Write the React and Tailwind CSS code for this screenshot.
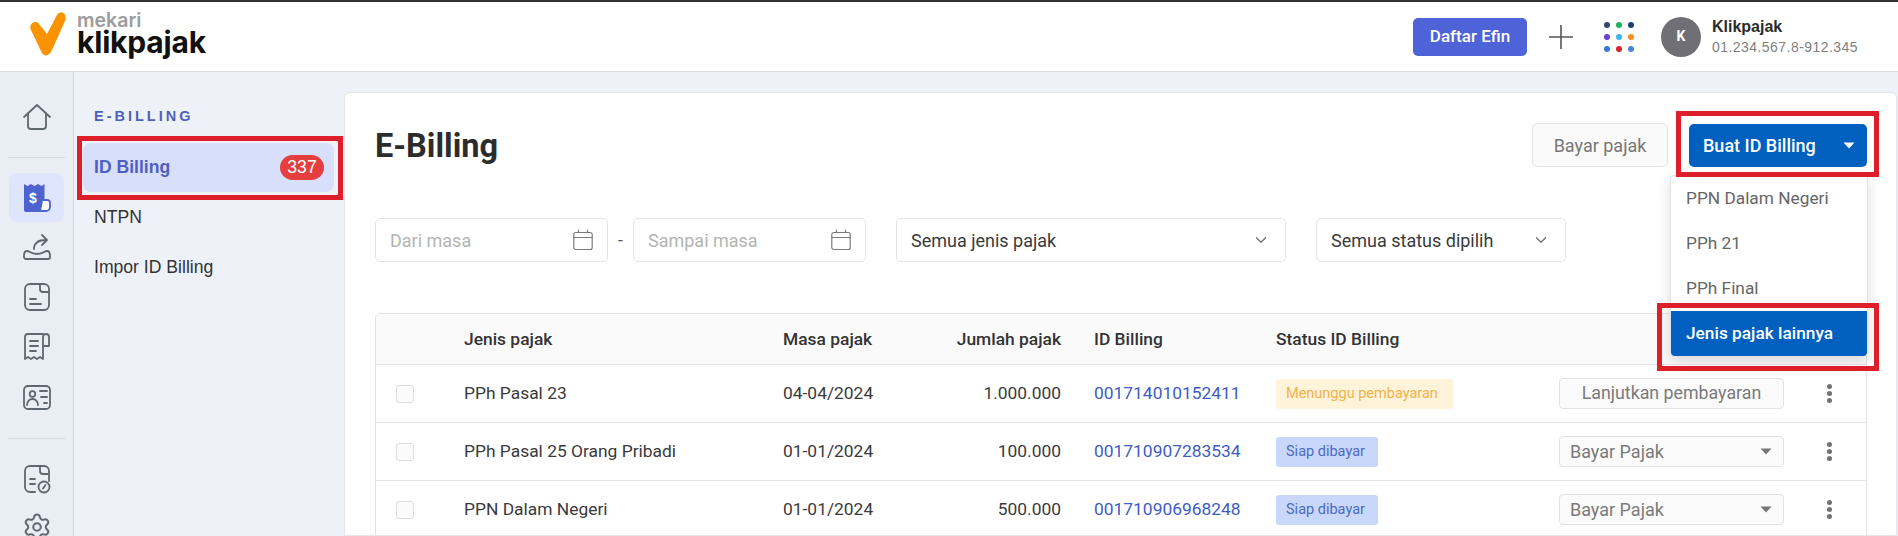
import React from "react";
import { ChevronDown, Settings } from "lucide-react";

const rows = [
  { jenis: "PPh Pasal 23", masa: "04-04/2024", jumlah: "1.000.000", id: "001714010152411", status: "wait", action: "Lanjutkan pembayaran" },
  { jenis: "PPh Pasal 25 Orang Pribadi", masa: "01-01/2024", jumlah: "100.000", id: "001710907283534", status: "ready", action: "Bayar Pajak" },
  { jenis: "PPN Dalam Negeri", masa: "01-01/2024", jumlah: "500.000", id: "001710906968248", status: "ready", action: "Bayar Pajak" },
];

const dots = ["#2d4a6e", "#1fb25a", "#1d3f73", "#6b3fd4", "#3fb5ea", "#f5921e", "#2f7be0", "#d9232e", "#4a84d8"];

function RailIcon({ children }) {
  return (
    <div className="h-[50px] flex items-center justify-center">
      <svg width="30" height="30" viewBox="0 0 30 30" fill="none" stroke="#5f6770" strokeWidth="1.8" strokeLinecap="round" strokeLinejoin="round">
        {children}
      </svg>
    </div>
  );
}

function CalendarIcon() {
  return (
    <svg width="20" height="22" viewBox="0 0 20 22" fill="none" stroke="#7b7b7b" strokeWidth="1.2" strokeLinecap="round">
      <rect x="0.8" y="3.5" width="18.4" height="17" rx="2" />
      <path d="M0.8 8.5h18.4M5.5 1v2.5M14.5 1v2.5" />
    </svg>
  );
}

function Caret({ color }) {
  return (
    <svg width="12" height="7" viewBox="0 0 12 7">
      <path d="M0.5 0.5h11L6 6.5z" fill={color} />
    </svg>
  );
}

function RedBox({ className }) {
  return <div className={"absolute border-[5px] border-[#dc1f2b] pointer-events-none z-20 " + className} />;
}

function DateField({ label }) {
  return (
    <div className="w-[233px] h-[44px] flex items-center justify-between pl-[14px] pr-[14px] border border-[#e4e4e4] rounded-[5px] text-[18px] text-[#b4b4b4]">
      <span>{label}</span>
      <CalendarIcon />
    </div>
  );
}

function SelectField({ label, className }) {
  return (
    <div className={"h-[44px] flex items-center justify-between pl-[14px] pr-[15px] border border-[#e4e4e4] rounded-[5px] text-[18px] text-[#3a3a3a] " + className}>
      <span>{label}</span>
      <ChevronDown size={18} strokeWidth={1.6} color="#6f6f6f" />
    </div>
  );
}

function Row({ row }) {
  return (
    <div className="grid grid-cols-[88px_319px_120px_158px_215px_283px_225px_1fr] items-center h-[58px] border-t border-[#e4e4e4] text-[#3a3a3a]">
      <div className="pl-[20px]">
        <div className="w-[18px] h-[18px] border border-[#dedede] rounded-[3px] bg-[#fbfbfb]" />
      </div>
      <div>{row.jenis}</div>
      <div>{row.masa}</div>
      <div className="text-right">{row.jumlah}</div>
      <div className="pl-[33px] text-[#3d5cc4]">{row.id}</div>
      <div>
        {row.status === "wait" ? (
          <span className="inline-flex items-center h-[30px] w-[177px] pl-[10px] rounded-[3px] bg-[#fff3d9] text-[#f4b24c] text-[14.5px]">Menunggu pembayaran</span>
        ) : (
          <span className="inline-flex items-center h-[30px] w-[102px] pl-[10px] rounded-[3px] bg-[#c9d8fa] text-[#4a6cc0] text-[14.5px]">Siap dibayar</span>
        )}
      </div>
      {row.status === "wait" ? (
        <div className="h-[31px] flex items-center justify-center border border-[#e2e2e2] rounded-[4px] bg-[#fbfbfb] text-[17.8px] text-[#7a7a7a]">{row.action}</div>
      ) : (
        <div className="h-[31px] flex items-center justify-between pl-[10px] pr-[11px] border border-[#e2e2e2] rounded-[4px] bg-[#fbfbfb] text-[18px] text-[#7a7a7a]">
          <span>{row.action}</span>
          <Caret color="#777777" />
        </div>
      )}
      <div className="pl-[43px] flex flex-col gap-[2px]">
        <span className="w-[5px] h-[5px] rounded-full bg-[#737373]" />
        <span className="w-[5px] h-[5px] rounded-full bg-[#737373]" />
        <span className="w-[5px] h-[5px] rounded-full bg-[#737373]" />
      </div>
    </div>
  );
}

export default function App() {
  return (
    <div className="h-[536px] overflow-hidden flex flex-col bg-[#eef2f8] font-[Roboto,sans-serif] text-[17.4px]">
      {/* Header */}
      <header className="h-[72px] shrink-0 flex items-center bg-white border-t-2 border-b border-t-[#333333] border-b-[#d9dde2]">
        <svg className="ml-[29px] mb-[5px]" width="38" height="46" viewBox="29 11 38 46">
          <path d="M31 30C28 25 35 19 39 24L47 34L57 15C60 10 68 13 65 21L52 50C49 57 43 57 41 51Z" fill="#fa9300" />
        </svg>
        <div className="ml-[10px] mb-[5px] flex flex-col font-[Inter,sans-serif]">
          <span className="text-[19.5px] leading-[16px] font-semibold text-[#9c9c9c]">mekari</span>
          <span className="text-[30px] leading-[28px] font-bold text-[#111111] tracking-[-0.2px]">klikpajak</span>
        </div>
        <div className="ml-auto flex items-center">
          <button className="w-[114px] h-[38px] rounded-[5px] bg-[#4f63d9] text-white text-[17px] font-medium">Daftar Efin</button>
          <svg className="ml-[22px]" width="24" height="24" viewBox="0 0 24 24" stroke="#555555" strokeWidth="1.6">
            <path d="M12 0v24M0 12h24" />
          </svg>
          <div className="ml-[31px] grid grid-cols-3 gap-x-[6px] gap-y-[6px]">
            {dots.map((c) => (
              <span key={c} className="w-[6px] h-[6px] rounded-full" style={{ backgroundColor: c }} />
            ))}
          </div>
          <div className="ml-[27px] w-[40px] h-[40px] rounded-full bg-[#6f6f75] flex items-center justify-center text-white text-[14px] font-bold">K</div>
          <div className="ml-[11px] mr-[40px] flex flex-col gap-[3px] font-['Liberation_Sans',sans-serif]">
            <span className="text-[16px] leading-[19px] font-bold text-[#2b2b2b]">Klikpajak</span>
            <span className="text-[14px] leading-[17px] tracking-[0.45px] text-[#808080]">01.234.567.8-912.345</span>
          </div>
        </div>
      </header>

      <div className="flex flex-1 min-h-0">
        {/* Icon rail */}
        <aside className="w-[74px] shrink-0 border-r border-[#cfd4da] bg-[#e9eef4] pt-[20px]">
          <RailIcon>
            <path d="M2 15 L15 3 L28 15" />
            <path d="M6 12v12a3 3 0 0 0 3 3h12a3 3 0 0 0 3-3V12" />
          </RailIcon>
          <div className="mt-[15px] mx-[8px] h-px bg-[#d5dae0]" />
          <div className="mt-[15px] mx-[9px] h-[49px] rounded-[8px] bg-[#dfe5fc] flex items-center justify-center">
            <svg width="30" height="30" viewBox="0 0 30 30">
              <path d="M2 1l3.500 2 3.500-2 3.500 2 3.500-2 3.500 2 3-2v26a2 2 0 0 1-2 2H4a2 2 0 0 1-2-2z" fill="#4f63d0" />
              <path d="M21 17h4a3 3 0 0 1 3 3v4a4 4 0 0 1-4 4h-5" fill="#ffffff" stroke="#4f63d0" strokeWidth="1.8" />
              <text x="11" y="20" fontSize="14" fontWeight="700" fill="#ffffff" textAnchor="middle" fontFamily="Liberation Sans, sans-serif">$</text>
            </svg>
          </div>
          <RailIcon>
            <path d="M2 24c0-3 1-5 3-5 3 0 3 3 10 3s7-3 10-3c2 0 3 2 3 5v1a2 2 0 0 1-2 2H4a2 2 0 0 1-2-2z" />
            <path d="M12 17c0-6 4-9 12-9M20 3l5 5-5 5" />
          </RailIcon>
          <RailIcon>
            <rect x="3" y="2" width="24" height="26" rx="5" />
            <path d="M18 3v4a3 3 0 0 0 3 3h5M8 17h6M8 22h11" />
          </RailIcon>
          <RailIcon>
            <path d="M21 2H6a3 3 0 0 0-3 3v22l3-2 3 2 3-2 3 2 3-2 3 2V5a3 3 0 0 1 3-3 3 3 0 0 1 3 3v9h-6" />
            <path d="M8 9h8M8 14h8M8 19h6" />
          </RailIcon>
          <RailIcon>
            <rect x="2" y="4" width="26" height="23" rx="4" />
            <circle cx="10.500" cy="12" r="2.800" />
            <path d="M5 23c0-3.500 2.500-6 5.500-6s5.500 2.500 5.500 6M18 9h7M19 15h6M22 21h3" />
          </RailIcon>
          <div className="mt-[16px] mx-[8px] h-px bg-[#d5dae0]" />
          <div className="mt-[15px]">
            <RailIcon>
              <path d="M13 28H8a5 5 0 0 1-5-5V7a5 5 0 0 1 5-5h14a5 5 0 0 1 5 5v10" />
              <path d="M18 3v4a3 3 0 0 0 3 3h5M8 15h5M8 20h5" />
              <circle cx="22" cy="23" r="5.500" />
              <path d="M23.500 21l-2.500 3.500" />
            </RailIcon>
          </div>
          <div className="-mt-[2px] h-[50px] flex items-center justify-center">
            <Settings size={30} strokeWidth={1.6} color="#5f6770" />
          </div>
        </aside>

        {/* Sub menu */}
        <nav className="w-[270px] shrink-0 font-['Liberation_Sans',sans-serif] text-[17.6px] pt-[35px]">
          <div className="pl-[20px] h-[20px] flex items-center text-[14.5px] font-bold tracking-[3px] text-[#5060b8]">E-BILLING</div>
          <div className="relative mt-[16px] ml-[9px] w-[251px] h-[49px] pl-[11px] pr-[10px] rounded-[8px] bg-[#d8dffa] flex items-center justify-between">
            <span className="font-bold text-[#4f5fc5]">ID Billing</span>
            <span className="w-[44px] h-[25px] rounded-full bg-[#e53e3e] text-white flex items-center justify-center">337</span>
            <RedBox className="-left-[6px] -right-[9px] -top-[7px] -bottom-[8px]" />
          </div>
          <div className="pl-[20px] h-[50px] flex items-center text-[#333333]">NTPN</div>
          <div className="pl-[20px] h-[50px] flex items-center text-[#333333]">Impor ID Billing</div>
        </nav>

        {/* Main card */}
        <main className="flex-1 min-w-0 pt-[20px] pr-px">
          <div className="h-full bg-white border border-[#e3e6ea] rounded-t-[6px] pl-[30px] pr-[29px] pt-[30px]">
            <div className="flex items-center h-[44px]">
              <h1 className="mt-[2px] text-[32.5px] font-bold text-[#2c2c2c]">E-Billing</h1>
              <button className="ml-auto w-[136px] h-[44px] border border-[#e5e5e5] rounded-[5px] bg-[#fafafa] text-[#777777] text-[18px]">Bayar pajak</button>
              <div className="relative ml-[21px] w-[178px] h-[43px] rounded-[5px] bg-[#0060bf] text-white text-[18px] font-medium flex items-center justify-between pl-[14px] pr-[12px]">
                <span>Buat ID Billing</span>
                <Caret color="#ffffff" />
                <RedBox className="-left-[13px] -right-[12px] -top-[13px] -bottom-[10px]" />
                {/* Dropdown menu */}
                <div className="absolute top-[51px] -left-[19px] -right-[1px] z-10 bg-white border border-[#e3e3e3] rounded-[4px] shadow-[0_4px_14px_rgba(0,0,0,0.14)] text-[17.3px] text-[#666666] font-normal">
                  <div className="h-[45px] flex items-center pl-[15px] pt-[2px]">PPN Dalam Negeri</div>
                  <div className="h-[45px] flex items-center pl-[15px] pt-[2px]">PPh 21</div>
                  <div className="h-[45px] flex items-center pl-[15px] pt-[2px]">PPh Final</div>
                  <div className="relative h-[45px] flex items-center pl-[15px] pt-[2px] rounded-b-[4px] bg-[#0060bf] text-white font-medium">
                    Jenis pajak lainnya
                    <RedBox className="-left-[14px] -right-[12px] -top-[8px] -bottom-[15px]" />
                  </div>
                </div>
              </div>
            </div>

            {/* Filters */}
            <div className="mt-[51px] flex items-center">
              <DateField label="Dari masa" />
              <span className="w-[25px] text-center text-[#555555]">-</span>
              <DateField label="Sampai masa" />
              <SelectField label="Semua jenis pajak" className="ml-[30px] w-[390px]" />
              <SelectField label="Semua status dipilih" className="ml-[30px] w-[250px]" />
            </div>

            {/* Table */}
            <div className="mt-[51px] border border-[#e4e4e4] rounded-t-[5px]">
              <div className="grid grid-cols-[88px_319px_120px_158px_215px_283px_225px_1fr] items-center h-[50px] bg-[#fafafa] rounded-t-[5px] font-medium text-[#333333]">
                <div />
                <div>Jenis pajak</div>
                <div>Masa pajak</div>
                <div className="text-right">Jumlah pajak</div>
                <div className="pl-[33px]">ID Billing</div>
                <div>Status ID Billing</div>
                <div />
                <div />
              </div>
              {rows.map((row) => (
                <Row key={row.id} row={row} />
              ))}
            </div>
          </div>
        </main>
      </div>
    </div>
  );
}
